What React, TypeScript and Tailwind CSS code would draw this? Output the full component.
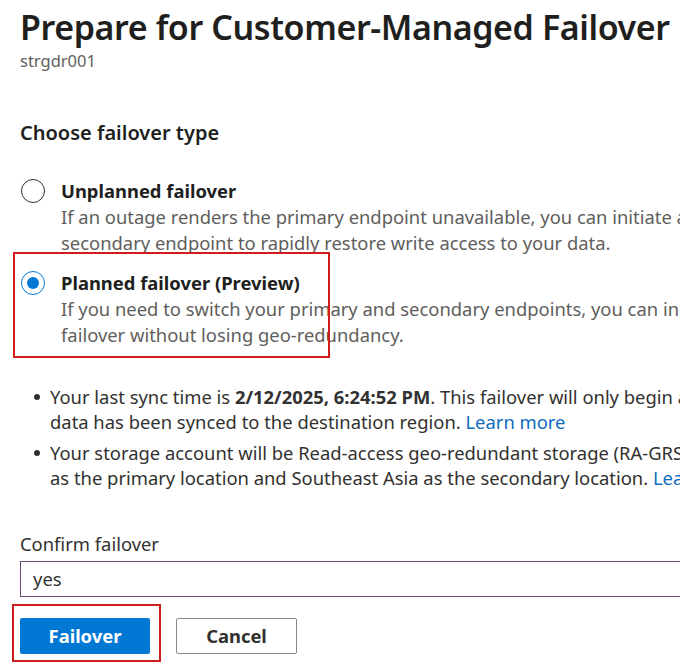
import React from "react";

function Radio({ checked }: { checked?: boolean }) {
  return (
    <span
      className={
        "flex h-[24px] w-[24px] shrink-0 items-center justify-center rounded-full border bg-white " +
        (checked ? "border-[#0078d4]" : "border-[#323130]")
      }
    >
      {checked && <span className="h-[12px] w-[12px] rounded-full bg-[#0078d4]" />}
    </span>
  );
}

function Option({
  title,
  lines,
  checked,
}: {
  title: string;
  lines: string[];
  checked?: boolean;
}) {
  return (
    <div className="flex gap-[16px]">
      <div className="flex h-[26px] items-center pl-[1px]">
        <Radio checked={checked} />
      </div>
      <div className="leading-[26px]">
        <div className="text-[18.4px] font-bold text-[#201f1e]">{title}</div>
        {lines.map((l) => (
          <div key={l} className="text-[18.4px] text-[#605e5c]">
            {l}
          </div>
        ))}
      </div>
    </div>
  );
}

function Bullet({ children }: { children: React.ReactNode }) {
  return (
    <li className="flex">
      <span className="flex h-[25px] w-[30px] shrink-0 items-center pl-[14px]">
        <span className="h-[6px] w-[6px] rounded-full bg-[#323130]" />
      </span>
      <div>{children}</div>
    </li>
  );
}

export default function App() {
  return (
    <div className="h-[666px] w-[680px] overflow-hidden whitespace-nowrap bg-white px-[20px] font-['Noto_Sans',sans-serif] text-[#323130]">
      <h1 className="pt-[5px] text-[34px] font-semibold leading-[44px] tracking-[-0.4px] text-[#201f1e]">
        Prepare for Customer-Managed Failover
      </h1>
      <div className="text-[16.5px] leading-[24px] text-[#605e5c]">strgdr001</div>

      <h2 className="mt-[46px] text-[20px] font-semibold leading-[28px] text-[#201f1e]">
        Choose failover type
      </h2>

      <div className="mt-[31px]">
        <Option
          title="Unplanned failover"
          lines={[
            "If an outage renders the primary endpoint unavailable, you can initiate a failover to the",
            "secondary endpoint to rapidly restore write access to your data.",
          ]}
        />
        <div className="relative mt-[14px]">
          <div className="pointer-events-none absolute left-[-7px] top-[-18px] h-[106px] w-[317px] border-2 border-[#d01c1c]" />
          <Option
            checked
            title="Planned failover (Preview)"
            lines={[
              "If you need to switch your primary and secondary endpoints, you can initiate a planned",
              "failover without losing geo-redundancy.",
            ]}
          />
        </div>
      </div>

      <ul className="mt-[36px] flex flex-col gap-[6px] text-[18.4px] leading-[25px]">
        <Bullet>
          <div>
            Your last sync time is <b>2/12/2025, 6:24:52 PM</b>. This failover will only begin after all
          </div>
          <div>
            data has been synced to the destination region.{" "}
            <a className="text-[#0f6cbd]">Learn more</a>
          </div>
        </Bullet>
        <Bullet>
          <div>
            Your storage account will be Read-access geo-redundant storage (RA-GRS) with East US
          </div>
          <div>
            as the primary location and Southeast Asia as the secondary location.{" "}
            <a className="text-[#0f6cbd]">Learn more</a>
          </div>
        </Bullet>
      </ul>

      <label className="mt-[42px] block text-[18.4px] leading-[24px] text-[#323130]">
        Confirm failover
      </label>
      <div className="mt-[5px] flex h-[36px] w-[900px] items-center border border-[#6b4c79] px-[12px] text-[18.4px] text-[#323130]">
        yes
      </div>

      <div className="mt-[21px] flex gap-[26px]">
        <div className="relative">
          <div className="pointer-events-none absolute left-[-8px] top-[-14px] h-[58px] w-[149px] border-2 border-[#d01c1c]" />
          <button className="flex h-[36px] w-[130px] items-center justify-center rounded-[2px] bg-[#0078d4] text-[18.4px] font-bold text-white">
            Failover
          </button>
        </div>
        <button className="flex h-[36px] w-[121px] items-center justify-center rounded-[2px] border border-[#8a8886] bg-white text-[18.4px] font-bold text-[#323130]">
          Cancel
        </button>
      </div>
    </div>
  );
}
